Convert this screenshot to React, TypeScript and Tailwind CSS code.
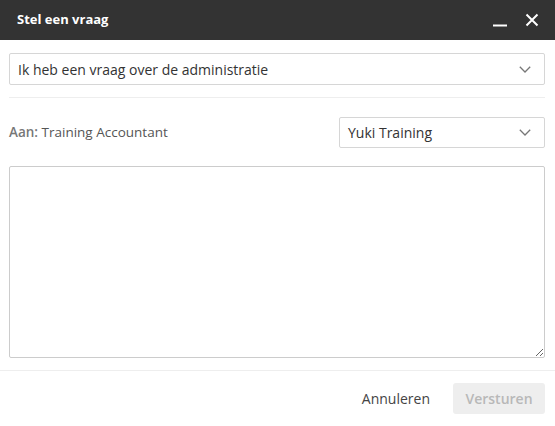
import { useState } from 'react';

function Chevron() {
  return (
    <svg width="12" height="7" viewBox="0 0 12 7" className="shrink-0">
      <path d="M0.8 0.8l5.2 5.2 5.2-5.2" fill="none" stroke="#777" strokeWidth="1.3" />
    </svg>
  );
}

function App() {
  const [subject] = useState('Ik heb een vraag over de administratie');
  const [domain] = useState('Yuki Training');

  return (
    <div className="w-[555px] h-[426px] bg-white flex flex-col font-['Open_Sans',sans-serif] text-[#333]">
      {/* Kop */}
      <div className="h-[40px] bg-[#333333] flex items-center pl-[17px] pr-[16px]">
        <h1 className="text-white text-[13px] font-bold flex-1">Stel een vraag</h1>
        <div className="flex items-center gap-[17px]">
          <svg width="16" height="16" viewBox="0 0 16 16">
            <path d="M1 13.5h14" stroke="#fff" strokeWidth="2" />
          </svg>
          <svg width="14" height="14" viewBox="0 0 14 14">
            <path d="M1.5 1.5l11 11M12.5 1.5l-11 11" stroke="#fff" strokeWidth="2" />
          </svg>
        </div>
      </div>

      <div className="flex flex-col px-[9px] pr-[10px] pt-[13px]">
        <button className="h-[32px] w-full border border-[#d6d6d6] rounded-[2px] flex items-center pl-[8px] pr-[13px] text-[14px] text-[#333] text-left">
          <span className="flex-1">{subject}</span>
          <Chevron />
        </button>

        <div className="h-px bg-[#eeeeee] mt-[12px]" />

        <div className="flex items-center mt-[19px]">
          <div className="flex-1 text-[13.5px] text-[#555]">
            <span className="font-semibold text-[#777]">Aan:</span> Training Accountant
          </div>
          <button className="w-[206px] h-[31px] border border-[#d6d6d6] rounded-[2px] flex items-center pl-[8px] pr-[13px] text-[14px] text-[#333] text-left">
            <span className="flex-1">{domain}</span>
            <Chevron />
          </button>
        </div>

        <textarea className="mt-[18px] h-[192px] w-full border border-[#cccccc] rounded-[2px] resize-y p-2 text-[14px] outline-none" />
      </div>

      <div className="h-px bg-[#eeeeee] mt-[12px]" />

      <div className="flex items-center justify-end gap-[23px] pr-[10px] pt-[12px]">
        <button className="text-[14px] text-[#444]">Annuleren</button>
        <button className="w-[92px] h-[31px] rounded-[3px] bg-[#eeeeee] text-[#b8b8b8] text-[14px] font-semibold" disabled>
          Versturen
        </button>
      </div>
    </div>
  );
}

export default App;
